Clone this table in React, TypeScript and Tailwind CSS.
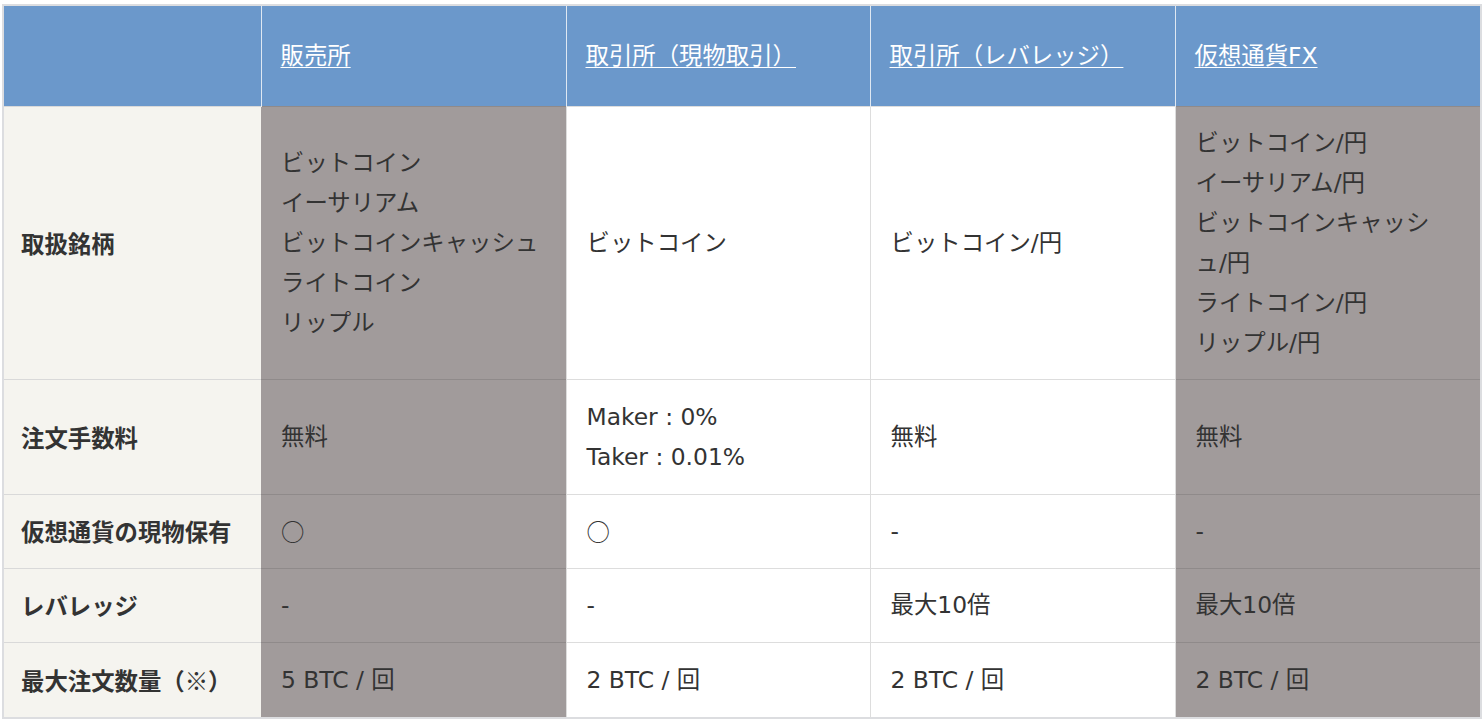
import React from "react";

const font = { fontFamily: '"DejaVu Sans", "Noto Sans CJK JP", sans-serif' };
const cjk = { fontFamily: '"Noto Sans CJK JP", sans-serif' };

type Cell = { lines: string[]; gray?: boolean };
type Row = { label: string; h: string; cells: Cell[] };

const rows: Row[] = [
  {
    label: "取扱銘柄",
    h: "h-[273px]",
    cells: [
      { lines: ["ビットコイン", "イーサリアム", "ビットコインキャッシュ", "ライトコイン", "リップル"], gray: true },
      { lines: ["ビットコイン"] },
      { lines: ["ビットコイン/円"] },
      { lines: ["ビットコイン/円", "イーサリアム/円", "ビットコインキャッシ", "ュ/円", "ライトコイン/円", "リップル/円"], gray: true },
    ],
  },
  {
    label: "注文手数料",
    h: "h-[115px]",
    cells: [
      { lines: ["無料"], gray: true },
      { lines: ["Maker : 0%", "Taker : 0.01%"] },
      { lines: ["無料"] },
      { lines: ["無料"], gray: true },
    ],
  },
  {
    label: "仮想通貨の現物保有",
    h: "h-[74px]",
    cells: [
      { lines: ["○"], gray: true },
      { lines: ["○"] },
      { lines: ["-"] },
      { lines: ["-"], gray: true },
    ],
  },
  {
    label: "レバレッジ",
    h: "h-[74px]",
    cells: [
      { lines: ["-"], gray: true },
      { lines: ["-"] },
      { lines: ["最大10倍"] },
      { lines: ["最大10倍"], gray: true },
    ],
  },
  {
    label: "最大注文数量（※）",
    h: "h-[75px]",
    cells: [
      { lines: ["5 BTC / 回"], gray: true },
      { lines: ["2 BTC / 回"] },
      { lines: ["2 BTC / 回"] },
      { lines: ["2 BTC / 回"], gray: true },
    ],
  },
];

const headers = ["販売所", "取引所（現物取引）", "取引所（レバレッジ）", "仮想通貨FX"];

export default function App() {
  return (
    <div className="w-[1484px] h-[725px] bg-white pt-[4px] pl-[2px]" style={font}>
      <div className="w-[1480px] border-2 border-[#dcdde0]">
        <table className="w-[1476px] table-fixed border-collapse text-[23.4px] leading-[40px] text-[#333333]">
          <colgroup>
            <col className="w-[257px]" />
            <col className="w-[305px]" />
            <col className="w-[304px]" />
            <col className="w-[305px]" />
            <col className="w-[305px]" />
          </colgroup>
          <thead>
            <tr className="h-[100px] bg-[#6b98cb]">
              <th className="border-r border-[#dfe8f2]"></th>
              {headers.map((h, i) => (
                <th
                  key={h}
                  className={`px-[19px] text-left align-middle font-normal text-white ${i < 3 ? "border-r border-[#dfe8f2]" : ""}`}
                >
                  <a href="#" className="underline underline-offset-[3px] decoration-1 whitespace-nowrap">
                    {h}
                  </a>
                </th>
              ))}
            </tr>
          </thead>
          <tbody>
            {rows.map((r) => (
              <tr key={r.label} className={r.h}>
                <td
                  className="bg-[#f5f4ef] pl-[17px] pr-1 align-middle font-bold border-t border-[#d9d9d9] whitespace-nowrap"
                  style={cjk}
                >
                  {r.label}
                </td>
                {r.cells.map((c, i) => (
                  <td
                    key={i}
                    className={`px-[20px] py-[15px] align-middle border-t ${
                      c.gray ? "bg-[#a19b9b] border-[#8f8a8a]" : "bg-white border-[#dddddd] border-x"
                    }`}
                  >
                    {c.lines.map((l, j) => (
                      <div key={j} className="whitespace-nowrap" style={l === "○" ? cjk : undefined}>
                        {l}
                      </div>
                    ))}
                  </td>
                ))}
              </tr>
            ))}
          </tbody>
        </table>
      </div>
    </div>
  );
}
